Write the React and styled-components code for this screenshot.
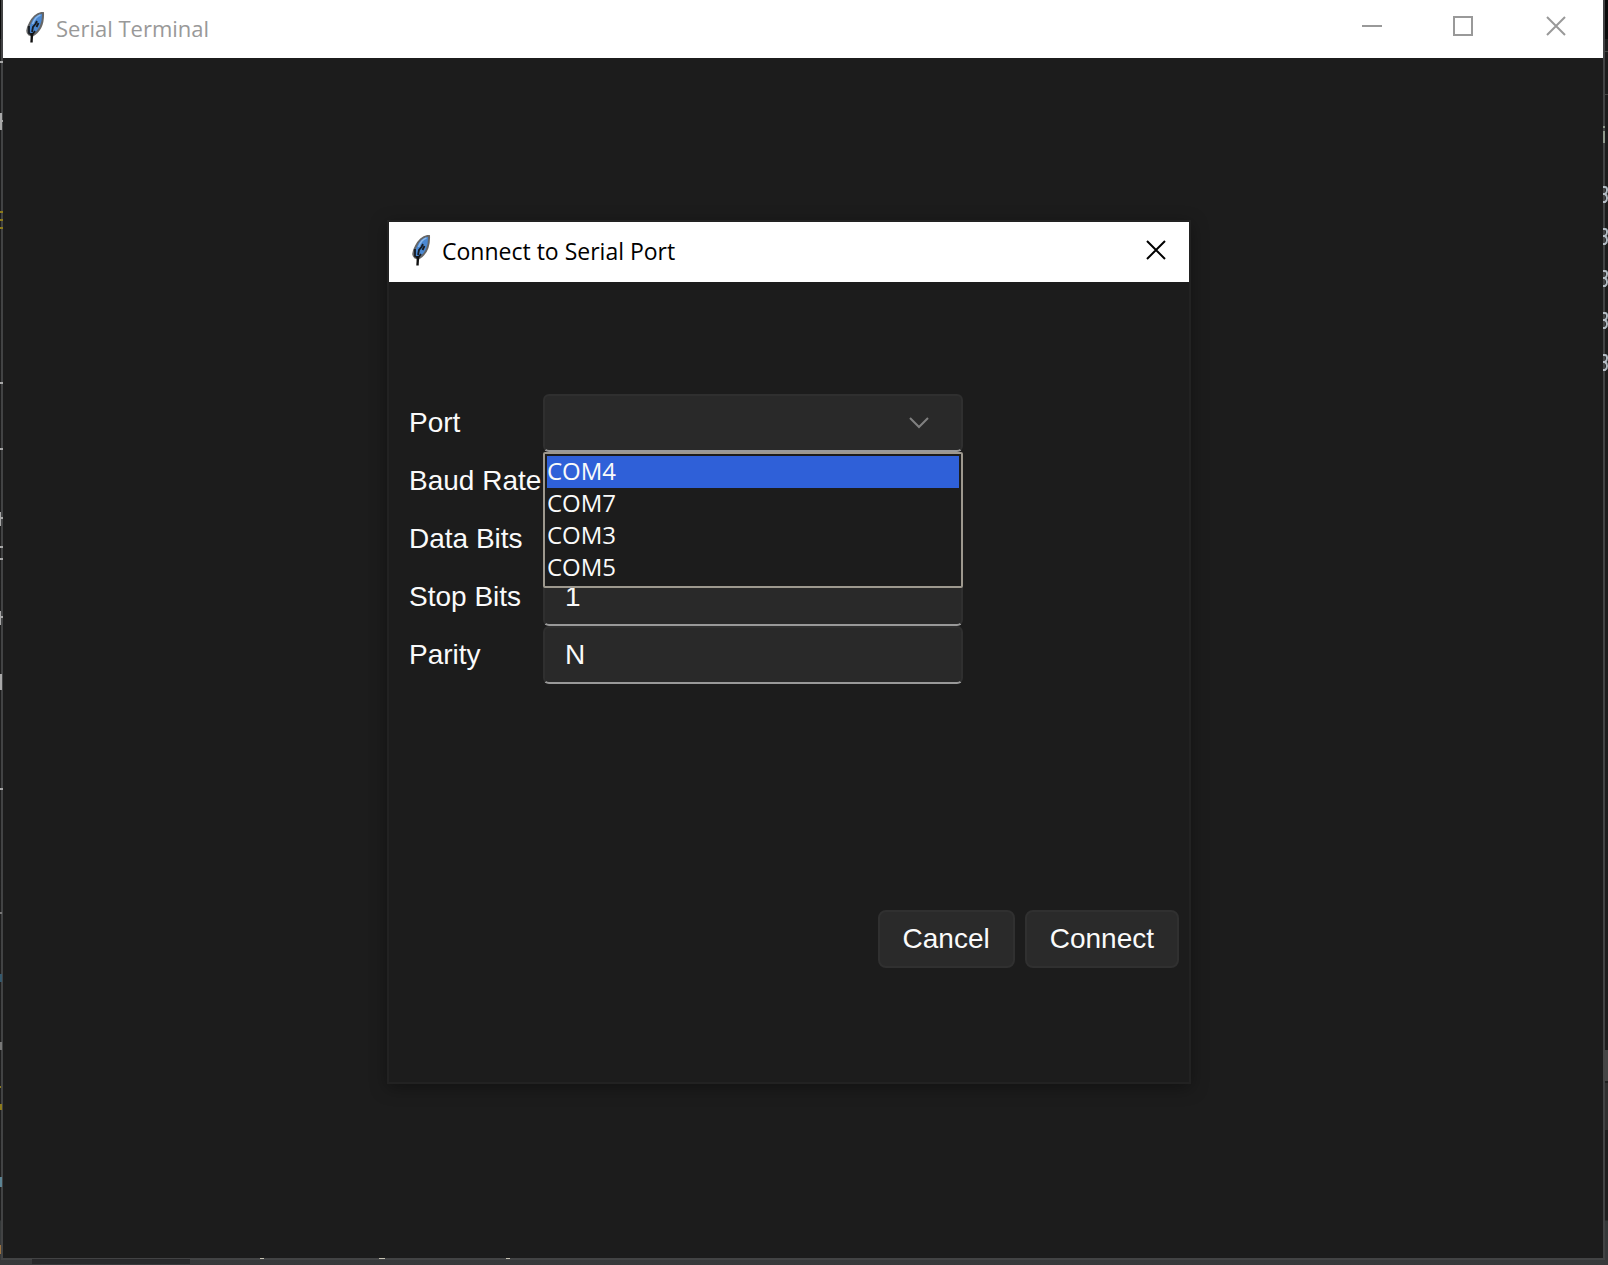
import React, { useState } from "react";
import styled, { createGlobalStyle } from "styled-components";

const Global = createGlobalStyle`
  * { box-sizing: border-box; }
  body { margin: 0; background: #252526; font-family: "Liberation Sans", Arial, sans-serif; }
`;

const Desktop = styled.div`
  position: relative;
  min-height: 100vh;
  display: flex;
  flex-direction: column;
  padding: 0 3px 5px 1px;
  overflow: hidden;
  background: linear-gradient(to bottom, #0a0a0a 0, #0a0a0a 39px, #1c1c1c 39px, #1e1e1e calc(100% - 45px), #343838 calc(100% - 44px), #38393b 100%);
`;

const Scrap = styled.span`
  position: absolute;
  ${(p) => (p.$side === "right" ? "right" : "left")}: ${(p) => p.$inset || 0}px;
  top: ${(p) => p.$top}px;
  width: ${(p) => p.$width || 3}px;
  height: ${(p) => p.$height || 2}px;
  background: ${(p) => p.$color || "#a8a8a8"};
`;

const BottomScrap = styled.span`
  position: absolute;
  left: ${(p) => p.$left}px;
  bottom: 6px;
  width: ${(p) => p.$width}px;
  height: 1px;
  background: #c8c4b4;
`;

const EdgeGlyph = styled.svg`
  position: absolute;
  right: 0;
  top: ${(p) => p.$top}px;
`;

const TaskStrip = styled.div`
  position: absolute;
  left: 32px;
  bottom: 1px;
  width: 158px;
  height: 5px;
  background: #28282a;
`;

const Window = styled.main`
  flex: 1;
  display: flex;
  flex-direction: column;
  border: 2px solid #424344;
  border-top: 0;
`;

const TitleBar = styled.header`
  display: flex;
  align-items: center;
  height: ${(p) => p.$height}px;
  padding: 0 0 2px 19px;
  background: #fff;
  color: ${(p) => p.$color};
`;

const Title = styled.h1`
  flex: 1;
  margin: 0 0 0 10px;
  font: 400 ${(p) => p.$size}px/32px "Open Sans", "Noto Sans", sans-serif;
`;

const CaptionButton = styled.button`
  display: flex;
  align-items: center;
  justify-content: center;
  width: ${(p) => p.$width}px;
  height: ${(p) => p.$height || 52}px;
  align-self: flex-start;
  padding: 0;
  border: 0;
  background: none;
  color: inherit;
`;

const Body = styled.div`
  flex: 1;
  display: flex;
  justify-content: center;
  align-items: flex-start;
  padding: 162px 28px 0 0;
  background: #1c1c1c;
`;

const Dialog = styled.section`
  width: 804px;
  max-width: 100%;
  border: 2px solid #222;
  background: #1c1c1c;
  box-shadow: 0 4px 16px rgba(0, 0, 0, 0.35);
`;

const Form = styled.form`
  display: flex;
  flex-direction: column;
  justify-content: space-between;
  height: 800px;
  padding: 112px 10px 114px 20px;
`;

const Fields = styled.div`
  display: flex;
  flex-direction: column;
`;

const Row = styled.div`
  display: grid;
  grid-template-columns: 134px 420px;
  align-items: center;
  height: 58px;
`;

const Label = styled.label`
  font-size: 28px;
  line-height: 32px;
  color: #fafafa;
  white-space: nowrap;
`;

const Anchor = styled.div`
  position: relative;
`;

const control = `
  display: block;
  width: 100%;
  height: 58px;
  margin: 0;
  padding: 0 20px;
  border: 2px solid #2f2f2f;
  border-bottom-color: #999;
  border-radius: 6px;
  outline: 0;
  background: #292929;
  color: #fafafa;
  font: 28px/32px "Liberation Sans", Arial, sans-serif;
`;

const TextBox = styled.input`${control}`;

const Combo = styled.select`
  ${control}
  appearance: none;
`;

const Chevron = styled.svg`
  position: absolute;
  right: 34px;
  top: 23px;
  pointer-events: none;
`;

const List = styled.ul`
  position: absolute;
  z-index: 1;
  top: 58px;
  left: 0;
  width: 100%;
  margin: 0;
  padding: 2px;
  list-style: none;
  border: 2px solid #9d988e;
  border-radius: 2px;
  background: #1c1c1c;
`;

const Item = styled.li`
  height: 32px;
  background: ${(p) => (p.$active ? "#2f60d8" : "transparent")};
  color: #fafafa;
  font: 24px/30px "Open Sans", "Noto Sans", sans-serif;
`;

const Actions = styled.div`
  display: flex;
  justify-content: flex-end;
  gap: 10px;
`;

const Button = styled.button`
  height: 58px;
  padding: 0 23px;
  border: 2px solid #303030;
  border-radius: 8px;
  background: #2a2a2a;
  color: #fafafa;
  font: 28px/32px "Liberation Sans", Arial, sans-serif;
`;

function Feather() {
  return (
    <svg width="24" height="32" viewBox="0 0 24 32" aria-hidden="true">
      <path d="M21 0.800 C15 1 10 6 7.500 12 C5 16.500 4.500 20.500 7 22.500 L10.500 23.500 C17 20 21.500 12 21 0.800 Z" fill="#4a88d2" stroke="#666" strokeWidth="2" strokeLinejoin="round" />
      <path d="M18.500 3 C15 4 12 8 10.500 12" fill="none" stroke="#8ab8ec" strokeWidth="1.500" />
      <path d="M15 9 L13.500 12 L11 15 L10 20 M7 14 L7 21 L10 23 L13 19 M16.500 11 L14.500 15" fill="none" stroke="#161a20" strokeWidth="1.800" />
      <path d="M10 21 L9.500 30.500" fill="none" stroke="#111" strokeWidth="2.400" />
    </svg>
  );
}

function Cross() {
  return (
    <svg width="20" height="20" viewBox="0 0 20 20" aria-hidden="true">
      <path d="M1 1 L19 19 M19 1 L1 19" stroke="currentColor" strokeWidth="2" />
    </svg>
  );
}

const ports = ["COM4", "COM7", "COM3", "COM5"];
const settings = [
  { id: "baud", label: "Baud Rate", value: "" },
  { id: "data", label: "Data Bits", value: "" },
  { id: "stop", label: "Stop Bits", value: "1" },
  { id: "parity", label: "Parity", value: "N" },
];
const leftScraps = [
  [61], [113, 2, 17], [120, 3, 2], [211, 3, 2, "#8c7a1c"], [219, 3, 2, "#8c7a1c"], [227, 3, 2, "#8c7a1c"],
  [382], [448], [512, 1, 14], [517, 3, 2], [546], [558], [611, 1, 14], [616, 3, 2], [674, 2, 16], [788],
  [912, 2, 2, "#777"], [974, 2, 8, "#35586c"], [1042, 2, 8, "#777"], [1086, 1, 2, "#8c7a1c"],
  [1104, 2, 6, "#8c7a1c"], [1177, 2, 10, "#5c8494"], [1245, 1, 9, "#9c7240"],
];

export default function App() {
  const [active, setActive] = useState("COM4");
  return (
    <Desktop>
      <Global />
      <TaskStrip />
      <Window>
        <TitleBar $height={58} $color="#999">
          <Feather />
          <Title $size={22}>Serial Terminal</Title>
          <CaptionButton $width={90} aria-label="Minimize">
            <svg width="20" height="20" viewBox="0 0 20 20" aria-hidden="true"><path d="M0 10 H20" stroke="currentColor" strokeWidth="2" /></svg>
          </CaptionButton>
          <CaptionButton $width={92} aria-label="Maximize">
            <svg width="20" height="20" viewBox="0 0 20 20" aria-hidden="true"><path d="M1 1 H19 V19 H1 Z" fill="none" stroke="currentColor" strokeWidth="2" /></svg>
          </CaptionButton>
          <CaptionButton $width={94} aria-label="Close"><Cross /></CaptionButton>
        </TitleBar>
        <Body>
          <Dialog role="dialog" aria-labelledby="dialog-title">
            <TitleBar $height={60} $color="#000">
              <Feather />
              <Title as="h2" $size={23} id="dialog-title">Connect to Serial Port</Title>
              <CaptionButton $width={66} $height={56} aria-label="Close"><Cross /></CaptionButton>
            </TitleBar>
            <Form onSubmit={(e) => e.preventDefault()}>
              <Fields>
                <Row>
                  <Label htmlFor="port">Port</Label>
                  <Anchor>
                    <Combo id="port" defaultValue=""><option value="" /></Combo>
                    <Chevron width="20" height="12" viewBox="0 0 20 12" aria-hidden="true">
                      <path d="M1 1 L10 10 L19 1" fill="none" stroke="#808080" strokeWidth="2" />
                    </Chevron>
                    <List role="listbox" aria-label="Port">
                      {ports.map((p) => (
                        <Item key={p} role="option" aria-selected={p === active} $active={p === active} onMouseEnter={() => setActive(p)}>{p}</Item>
                      ))}
                    </List>
                  </Anchor>
                </Row>
                {settings.map((s) => (
                  <Row key={s.id}>
                    <Label htmlFor={s.id}>{s.label}</Label>
                    <TextBox id={s.id} defaultValue={s.value} />
                  </Row>
                ))}
              </Fields>
              <Actions>
                <Button type="button">Cancel</Button>
                <Button type="submit">Connect</Button>
              </Actions>
            </Form>
          </Dialog>
        </Body>
      </Window>
      {leftScraps.map(([top, w, h, c]) => (
        <Scrap key={top} $top={top} $width={w} $height={h} $color={c} />
      ))}
      <Scrap $side="right" $top={51} $width={5} $height={1} $color="#444" />
      <Scrap $side="right" $top={94} $width={5} $height={1} $color="#444" />
      <Scrap $side="right" $inset={3} $top={126} $width={2} $height={2} $color="#8f988c" />
      <Scrap $side="right" $inset={3} $top={131} $width={2} $height={12} $color="#8f988c" />
      <Scrap $side="right" $top={1050} $width={5} $height={31} $color="#454545" />
      <Scrap $side="right" $top={1083} $width={3} $height={47} $color="#303030" />
      {[186, 228, 270, 312, 354].map((t) => (
        <EdgeGlyph key={t} $top={t} width="5" height="17" viewBox="0 0 5 17" aria-hidden="true">
          <path d="M0 1 H2 Q4 1 4 4 T2 8 H0 M2 8 Q4 9 4 12 T2 16 H0" fill="none" stroke="#b4bcc4" strokeWidth="2" />
        </EdgeGlyph>
      ))}
      <BottomScrap $left={260} $width={4} />
      <BottomScrap $left={379} $width={6} />
      <BottomScrap $left={506} $width={4} />
    </Desktop>
  );
}
